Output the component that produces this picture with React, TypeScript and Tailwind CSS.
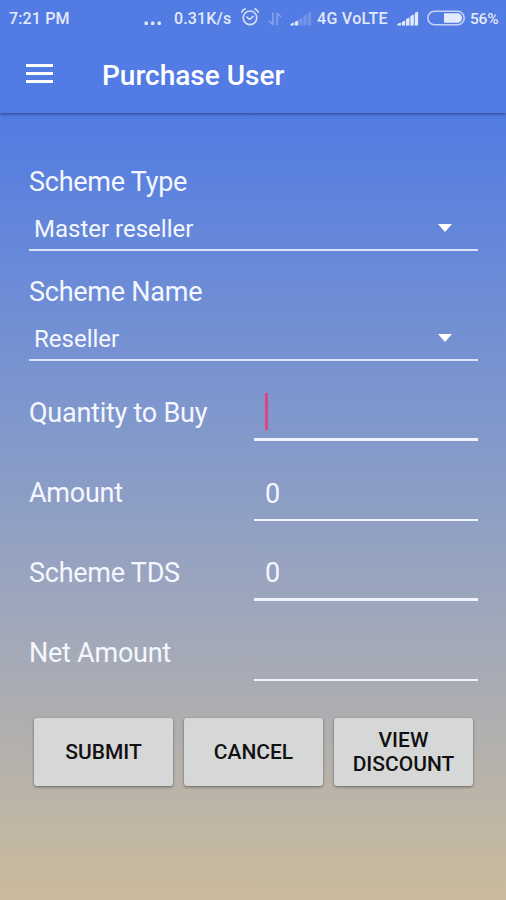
import { useState } from 'react'

const spinners = [
  { label: 'Scheme Type', value: 'Master reseller' },
  { label: 'Scheme Name', value: 'Reseller' },
]

function SignalIcon({ level }: { level: number }) {
  const bars = [3, 5, 8, 11, 14]
  return (
    <svg width="22" height="15" viewBox="0 0 22 15" className="shrink-0">
      {bars.map((h, i) => (
        <path key={h} d={`M${0.5 + i * 4.3} 14.5V${16 - h}L${3.9 + i * 4.3} ${14.5 - h}V14.5Z`} fill="#e3eafb" opacity={i < level ? 1 : 0.22} />
      ))}
    </svg>
  )
}

function StatusBar() {
  return (
    <div className="flex h-9 items-center pt-px pl-[9px] text-[16px] leading-9 font-medium tracking-[0.15px] whitespace-nowrap text-[#e3eafb]">
      <span className="w-[135px]">7:21 PM</span>
      <svg width="18" height="4" viewBox="0 0 18 4" className="mt-2 shrink-0" fill="#e3eafb">
        <rect x="0.5" y="0.5" width="3.4" height="3.4" rx="1" />
        <rect x="7" y="0.5" width="3.4" height="3.4" rx="1" />
        <rect x="13.5" y="0.5" width="3.4" height="3.4" rx="1" />
      </svg>
      <span className="ml-3 w-[66px]">0.31K/s</span>
      <svg width="20" height="20" viewBox="0 0 20 20" className="-mt-1 shrink-0" fill="none" stroke="#d3ddf8" strokeWidth="1.6" strokeLinecap="round" strokeLinejoin="round">
        <circle cx="10" cy="10.8" r="6.8" />
        <path d="M6.8 10 9.7 12.4 13.2 9.4M1.8 5.2C2.4 3.6 3.6 2.4 5.2 1.8M18.2 5.2C17.6 3.6 16.4 2.4 14.8 1.8" />
      </svg>
      <svg width="14" height="14" viewBox="0 0 14 14" className="ml-2 shrink-0" fill="none" stroke="#829fec" strokeWidth="1.8">
        <path d="M5 0.5V13M5 13 1.2 8.8M9.2 13.5V1M9.2 1 13 5.2" />
      </svg>
      <div className="ml-2">
        <SignalIcon level={2} />
      </div>
      <span className="ml-[5px] w-[80px] tracking-[0.3px]">4G VoLTE</span>
      <SignalIcon level={5} />
      <svg width="38" height="16" viewBox="0 0 38 16" className="-mt-0.5 ml-2 shrink-0">
        <rect x="0.8" y="1.3" width="36.4" height="13.4" rx="6.7" fill="none" stroke="#c5d2f6" strokeWidth="1.6" />
        <path d="M17 3.2H30.2A4.8 4.8 0 0 1 30.2 12.8H17Z" fill="#e3eafb" />
      </svg>
      <span className="ml-[5px] text-[15.5px] tracking-[-0.2px]">56%</span>
    </div>
  )
}

export default function App() {
  const [fields, setFields] = useState([
    { label: 'Quantity to Buy', value: '', line: 'border-b-[3px]' },
    { label: 'Amount', value: '0', line: 'border-b-2' },
    { label: 'Scheme TDS', value: '0', line: 'border-b-[3px]' },
    { label: 'Net Amount', value: '', line: 'border-b-2' },
  ])

  const handleChange = (index: number, value: string) => {
    setFields(fields.map((f, i) => (i === index ? { ...f, value } : f)))
  }

  return (
    <div className="flex h-[900px] w-[506px] flex-col overflow-hidden bg-[#527be3] font-['Roboto',sans-serif]">
      <header className="relative h-[113px] shrink-0 bg-[#527be3] shadow-[0_1px_3px_rgba(20,35,80,0.65)]">
        <StatusBar />
        <div className="flex h-[75px] items-center pl-[26px]">
          <button className="flex w-[27px] flex-col gap-[5px]">
            <span className="h-[3px] w-full bg-white" />
            <span className="h-[3px] w-full bg-white" />
            <span className="h-[3px] w-full bg-white" />
          </button>
          <h1 className="mt-[5px] ml-[49px] text-[28px] leading-8 font-medium text-white">Purchase User</h1>
        </div>
      </header>

      <main className="flex-1 bg-linear-to-b from-[#527be3] to-[#cbbb9c] pt-[50px] pr-7 pl-[29px] text-[#f4f7ff]">
        {spinners.map(s => (
          <div key={s.label} className="h-[110px]">
            <div className="h-[38px] text-[27px] leading-[38px] tracking-[-0.25px]">{s.label}</div>
            <div className="flex h-[50px] items-center justify-between border-b-2 border-[#dae3fa] pr-[26px] pl-[5px]">
              <span className="pt-[7px] text-[24px] leading-8">{s.value}</span>
              <svg width="14" height="8" viewBox="0 0 14 8" className="mt-1.5" fill="#fff">
                <path d="M0 0H14L7 8Z" />
              </svg>
            </div>
          </div>
        ))}

        {/* Amount fields */}
        <div className="-mt-[11px]">
          {fields.map((f, i) => (
            <div key={f.label} className="flex h-20">
              <label className="w-[225px] pt-[11px] text-[27px] leading-[60px] tracking-[-0.25px]">{f.label}</label>
              <div className={`flex h-[69px] flex-1 items-center border-[#eef3fd] pt-4 pl-[11px] ${f.line}`}>
                {i === 0 && <span className="-mt-1 h-[37px] w-[3px] bg-[#df4680]" />}
                <input
                  value={f.value}
                  onChange={e => handleChange(i, e.target.value)}
                  className="w-full bg-transparent text-[27px] leading-9 outline-none"
                />
              </div>
            </div>
          ))}
        </div>

        <div className="mt-[26px] flex gap-[11px] pr-[5px] pl-[5px]">
          {['SUBMIT', 'CANCEL', 'VIEW DISCOUNT'].map(text => (
            <button
              key={text}
              className="h-[68px] flex-1 rounded-[3px] bg-[#d6d8d7] px-2 text-[21px] leading-[24.5px] font-medium text-[#111] shadow-[0_1px_3px_rgba(0,0,0,0.45)]"
            >
              {text}
            </button>
          ))}
        </div>
      </main>
    </div>
  )
}
